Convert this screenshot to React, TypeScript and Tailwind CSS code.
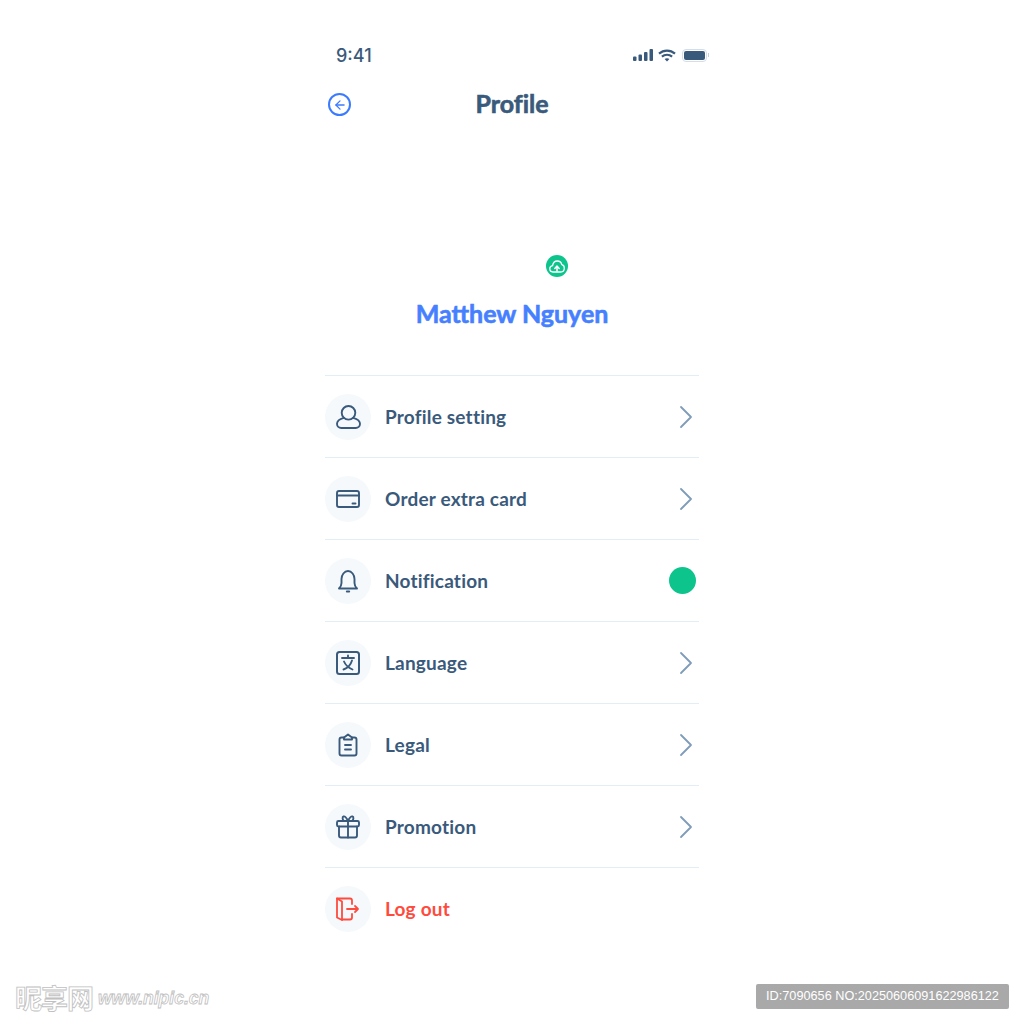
import { ArrowLeft } from "lucide-react"
import type { ReactNode } from "react"

const font = "font-['Lato','Noto_Sans',sans-serif]"

function Chevron() {
    return (
        <svg width="14" height="24" viewBox="0 0 14 24" fill="none" stroke="#7f9cb8" strokeWidth="1.8" strokeLinecap="round" strokeLinejoin="round">
            <path d="M2 2l10 10L2 22" />
        </svg>
    )
}

function StatusIcons() {
    return (
        <div className="flex items-center gap-[5px]">
            {/* signal */}
            <svg width="20" height="12" viewBox="0 0 20 12" fill="#3a5a7c">
                <rect x="0" y="7.5" width="3.5" height="4.5" rx="1" />
                <rect x="5.5" y="5.5" width="3.5" height="6.5" rx="1" />
                <rect x="11" y="3" width="3.5" height="9" rx="1" />
                <rect x="16.5" y="0" width="3.5" height="12" rx="1" />
            </svg>
            {/* wifi */}
            <svg width="18" height="13" viewBox="0 0 18 13" fill="none" stroke="#3a5a7c" strokeWidth="2.2" className="mr-[1px]">
                <path d="M1 4.6C5.6.5 12.4.5 17 4.6" />
                <path d="M3.900 7.600c2.900-2.500 7.300-2.500 10.200 0" />
                <path d="M9 12.600l-2.400-2.500c1.400-1 3.400-1 4.800 0z" fill="#3a5a7c" stroke="none" />
            </svg>
            {/* battery */}
            <div className="flex items-center gap-[1px]">
                <div className="w-[25px] h-[13px] rounded-[4px] border border-[#d5dee7] p-[1px]">
                    <div className="w-full h-full rounded-[2px] bg-[#3a5a7c]" />
                </div>
                <div className="w-[1px] h-[4px] bg-[#c5d0db]" />
            </div>
        </div>
    )
}

const stroke = { fill: "none", stroke: "#3a5a7c", strokeWidth: 1.9, strokeLinecap: "round", strokeLinejoin: "round" } as const

const icons: Record<string, ReactNode> = {
    user: (
        <svg width="26" height="26" viewBox="0 0 26 26" {...stroke}>
            <circle cx="13.500" cy="8.800" r="6.800" />
            <path d="M8.800 13.800C5 14.800 2 16.500 2 19.800c0 2.600 2 4.200 4.300 4.200h14.400c2.300 0 4.300-1.600 4.300-4.200 0-3.300-3-5-6.800-6" />
        </svg>
    ),
    card: (
        <svg width="26" height="26" viewBox="0 0 26 26" {...stroke}>
            <rect x="2" y="5" width="22" height="16" rx="2" />
            <path d="M2 9.500h22" />
            <path d="M17.500 17.500h3" />
        </svg>
    ),
    bell: (
        <svg width="26" height="26" viewBox="0 0 26 26" {...stroke}>
            <path d="M4 20.500c1.500-1.500 2.500-3 2.500-5.500v-4C6.500 7 9.300 3 13 3s6.500 4 6.500 8v4c0 2.500 1 4 2.500 5.500z" />
            <path d="M11.800 23.500h2.400" />
        </svg>
    ),
    lang: (
        <svg width="26" height="26" viewBox="0 0 26 26" {...stroke}>
            <rect x="2" y="2" width="22" height="22" rx="2.500" strokeWidth="2" />
            <path d="M13 5.500v2.500M7 8h12M9 11.500c1.500 3.500 5 6.500 8.500 8M17 10.500c-1.200 4-4 7.500-8.500 9" />
        </svg>
    ),
    legal: (
        <svg width="26" height="26" viewBox="0 0 26 26" {...stroke}>
            <path d="M9 5.500H6.500a2 2 0 0 0-2 2v14a2 2 0 0 0 2 2h13a2 2 0 0 0 2-2v-14a2 2 0 0 0-2-2H17" />
            <path d="M9 7.500v-2l4-3 4 3v2z" />
            <path d="M10 13h6M10 17.500h6" />
        </svg>
    ),
    gift: (
        <svg width="26" height="26" viewBox="0 0 26 26" {...stroke}>
            <rect x="2" y="7" width="22" height="5.500" rx="1.500" />
            <path d="M4 12.500v9a2 2 0 0 0 2 2h14a2 2 0 0 0 2-2v-9" />
            <path d="M13 7v16.500" />
            <path d="M13 7c-1.500-3-3-5-4.500-4.500S7.500 6 9 7M13 7c1.500-3 3-5 4.500-4.500S18.500 6 17 7" />
        </svg>
    ),
    logout: (
        <svg width="26" height="26" viewBox="0 0 26 26" fill="none" stroke="#ff4b3e" strokeWidth="1.800" strokeLinecap="round" strokeLinejoin="round">
            <path d="M2 2.500h13a2 2 0 0 1 2 2v3.500M17 18v3.500a2 2 0 0 1-2 2H7" />
            <path d="M2 2.500v19l5 2.500V5.500z" />
            <path d="M12 13h11M20 10l3 3-3 3" />
        </svg>
    ),
}

const rows = [
    { icon: "user", label: "Profile setting" },
    { icon: "card", label: "Order extra card" },
    { icon: "bell", label: "Notification", dot: true },
    { icon: "lang", label: "Language" },
    { icon: "legal", label: "Legal" },
    { icon: "gift", label: "Promotion" },
    { icon: "logout", label: "Log out", danger: true },
]

export default function App() {
    return (
        <div className={`relative w-[1024px] h-[1024px] bg-white flex justify-center overflow-hidden ${font}`}>
            <div className="w-[374px] flex flex-col">

                {/* Status bar */}
                <div className="h-[30px] mt-[40px] -mr-[10px] pl-[11px] flex items-center justify-between text-[18px] font-medium text-[#3a5a7c] font-['Inter',sans-serif]">
                    <span>9:41</span>
                    <StatusIcons />
                </div>

                {/* Header */}
                <div className="relative h-[40px] mt-[14px] flex items-center justify-center">
                    <div className="absolute left-[3px] top-[9px] w-[23px] h-[23px] rounded-full border-2 border-[#3b7bff] flex items-center justify-center">
                        <ArrowLeft size={14} strokeWidth={2.2} className="text-[#3b7bff]" />
                    </div>
                    <h1 className="text-[25px] font-bold text-[#3a5a7c] [font-variant-ligatures:none] [-webkit-text-stroke:0.6px_#3a5a7c]">Profile</h1>
                </div>

                {/* Avatar and name */}
                <div className="h-[251px] flex flex-col items-center">
                    <div className="relative w-full h-[174px]">
                        <div className="absolute left-[221px] top-[131px] w-[22px] h-[22px] rounded-full bg-[#0cc48c] flex items-center justify-center">
                            <svg width="16" height="13" viewBox="0 0 16 13" fill="none" stroke="#fff" strokeWidth="1.300" strokeLinecap="round" strokeLinejoin="round">
                                <path d="M4 12C2 12 .8 10.500.8 8.800c0-1.700 1.200-3 2.800-3.200C4 3 6 1 8.300 1c2.300 0 4 1.500 4.500 3.600 1.500.3 2.500 1.700 2.500 3.400 0 2.200-1.500 4-3.600 4z" />
                                <path d="M8 11V6.500M5.800 8.500L8 6l2.200 2.500" strokeWidth="1.500" />
                            </svg>
                        </div>
                    </div>
                    <div className="text-[25px] leading-[30px] font-bold text-[#4680ff] [-webkit-text-stroke:0.6px_#4680ff]">Matthew Nguyen</div>
                </div>

                {/* Menu */}
                <div className="flex flex-col">
                    {rows.map((row) => (
                        <div key={row.label} className="h-[82px] border-t-[1.5px] border-[#e3edf5] flex items-center">
                            <div className="w-[46px] h-[46px] rounded-full bg-[#f5f9fc] flex items-center justify-center">
                                {icons[row.icon]}
                            </div>
                            <span className={`ml-[14px] pt-[2px] text-[19px] font-bold tracking-[0.2px] [font-variant-ligatures:none] ${row.danger ? "text-[#ff4b3e]" : "text-[#3a5a7c]"}`}>
                                {row.label}
                            </span>
                            {row.dot ? (
                                <div className="ml-auto mr-[3px] w-[27px] h-[27px] rounded-full bg-[#0cc48c]" />
                            ) : row.danger ? null : (
                                <div className="ml-auto mr-[6px] flex"><Chevron /></div>
                            )}
                        </div>
                    ))}
                </div>
            </div>

            {/* Watermarks */}
            <div className="absolute left-[15px] top-[984px] flex items-center gap-[5px] text-white [-webkit-text-stroke:0.8px_#c0c0c0]">
                <span className="text-[27px] leading-[28px] font-bold tracking-[-1px] font-['Noto_Sans_CJK_SC',sans-serif]">昵享网</span>
                <span className="text-[17.500px] leading-[28px] font-bold italic font-['Liberation_Sans',sans-serif]">www.nipic.cn</span>
            </div>
            <div className="absolute left-[756px] top-[984px] w-[253px] h-[25px] rounded-[2px] bg-[#a9a9a9] flex items-center justify-center whitespace-nowrap text-[12.700px] text-white font-['Liberation_Sans',sans-serif]">
                ID:7090656 NO:20250606091622986122
            </div>
        </div>
    )
}
